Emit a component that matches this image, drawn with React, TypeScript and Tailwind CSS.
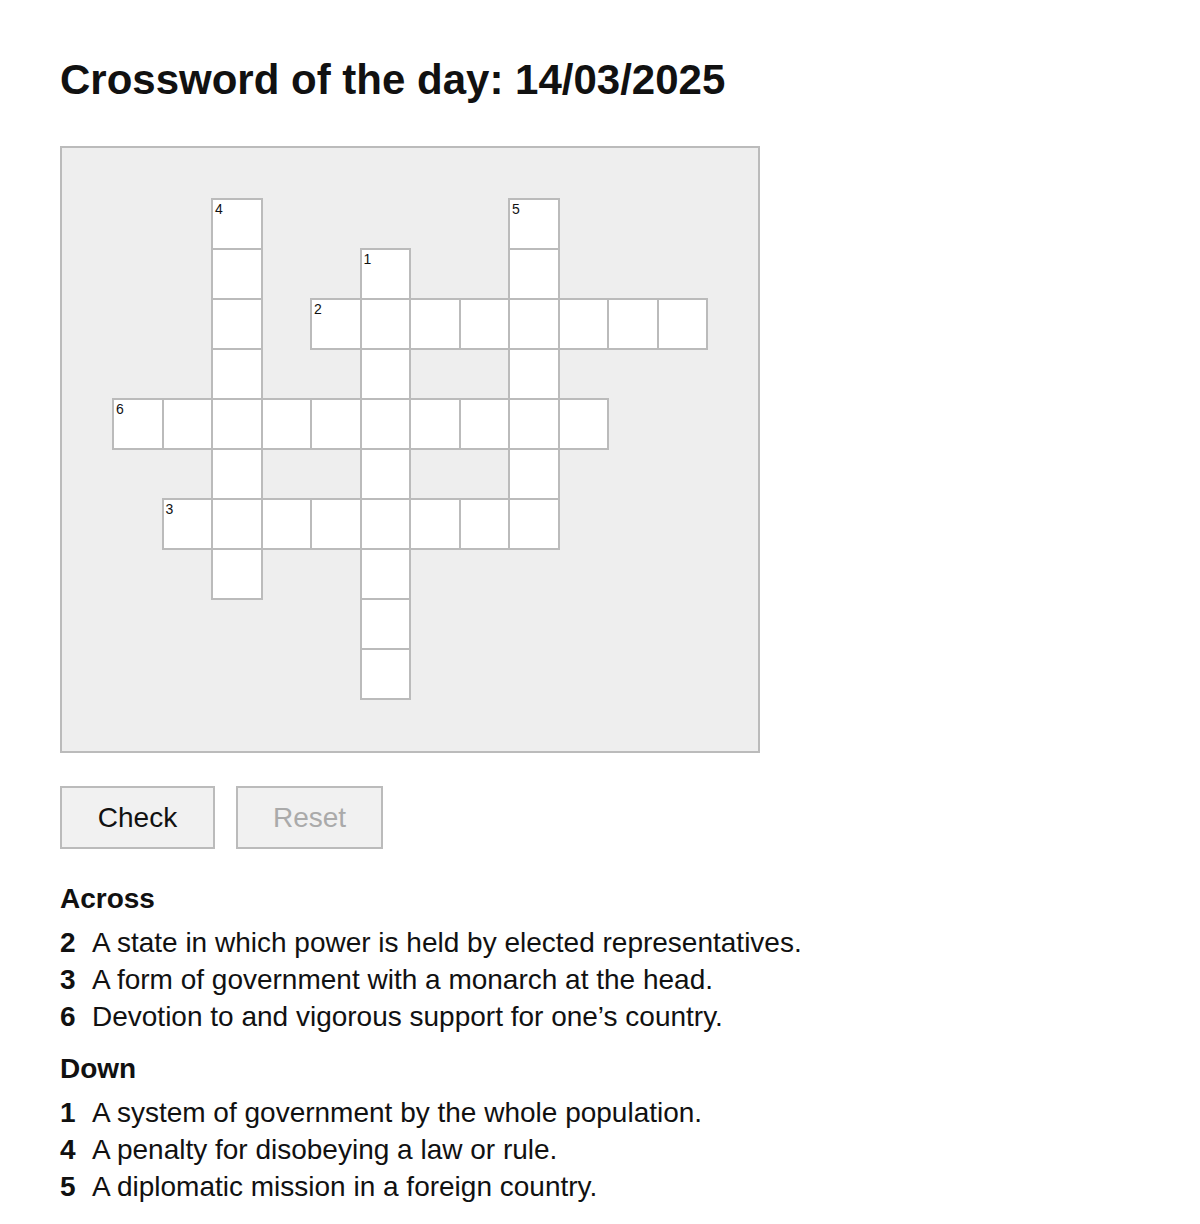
import React from "react";

type Entry = { n: number; r: number; c: number; len: number; dir: "a" | "d" };

const entries: Entry[] = [
  { n: 2, r: 2, c: 4, len: 8, dir: "a" },
  { n: 3, r: 6, c: 1, len: 8, dir: "a" },
  { n: 6, r: 4, c: 0, len: 10, dir: "a" },
  { n: 1, r: 1, c: 5, len: 9, dir: "d" },
  { n: 4, r: 0, c: 2, len: 8, dir: "d" },
  { n: 5, r: 0, c: 8, len: 7, dir: "d" },
];

const ROWS = 10;
const COLS = 12;

function buildGrid() {
  const active: boolean[][] = Array.from({ length: ROWS }, () => Array(COLS).fill(false));
  const nums: (number | null)[][] = Array.from({ length: ROWS }, () => Array(COLS).fill(null));
  for (const e of entries) {
    nums[e.r][e.c] = e.n;
    for (let i = 0; i < e.len; i++) {
      const r = e.dir === "d" ? e.r + i : e.r;
      const c = e.dir === "a" ? e.c + i : e.c;
      active[r][c] = true;
    }
  }
  return { active, nums };
}

const across = [
  { n: 2, t: "A state in which power is held by elected representatives." },
  { n: 3, t: "A form of government with a monarch at the head." },
  { n: 6, t: "Devotion to and vigorous support for one\u2019s country." },
];
const down = [
  { n: 1, t: "A system of government by the whole population." },
  { n: 4, t: "A penalty for disobeying a law or rule." },
  { n: 5, t: "A diplomatic mission in a foreign country." },
];

function ClueList({ title, items, className }: { title: string; items: { n: number; t: string }[]; className?: string }) {
  return (
    <div className={className}>
      <h2 className="text-[28px] leading-[37px] font-bold">{title}</h2>
      <ul className="mt-[7px]">
        {items.map((it) => (
          <li key={it.n} className="flex text-[28px] leading-[37px]">
            <span className="w-[32px] shrink-0 font-bold">{it.n}</span>
            <span>{it.t}</span>
          </li>
        ))}
      </ul>
    </div>
  );
}

export default function App() {
  const { active, nums } = buildGrid();
  return (
    <div
      className="min-h-[1224px] bg-white pl-[60px] pt-[59px] text-[#111]"
      style={{ fontFamily: '"Liberation Sans", Arial, Helvetica, sans-serif' }}
    >
      <h1 className="text-[42px] leading-[42px] font-bold">Crossword of the day: 14/03/2025</h1>

      <div className="mt-[45px] w-[700px] h-[607px] border-2 border-[#bbb] bg-[#eee] pl-[50px] pt-[50px]">
        <div className="grid grid-cols-[repeat(12,49.5px)] grid-rows-[repeat(10,50px)]">
          {active.map((row, r) =>
            row.map((on, c) =>
              on ? (
                <div
                  key={`${r}-${c}`}
                  className="relative w-[calc(100%+2px)] h-[52px] border-2 border-[#bbb] bg-white"
                >
                  {nums[r][c] !== null && (
                    <span className="absolute left-[2px] top-[1px] text-[14px] leading-[16px]">{nums[r][c]}</span>
                  )}
                </div>
              ) : (
                <div key={`${r}-${c}`} />
              )
            )
          )}
        </div>
      </div>

      <div className="mt-[33px] flex gap-[21px]">
        <button className="w-[155px] h-[63px] border-2 border-[#bbb] bg-[#f1f1f1] text-[28px] text-[#111]">
          Check
        </button>
        <button disabled className="w-[147px] h-[63px] border-2 border-[#bbb] bg-[#f1f1f1] text-[28px] text-[#aaa]">
          Reset
        </button>
      </div>

      <ClueList title="Across" items={across} className="mt-[31px]" />
      <ClueList title="Down" items={down} className="mt-[15px]" />
    </div>
  );
}
